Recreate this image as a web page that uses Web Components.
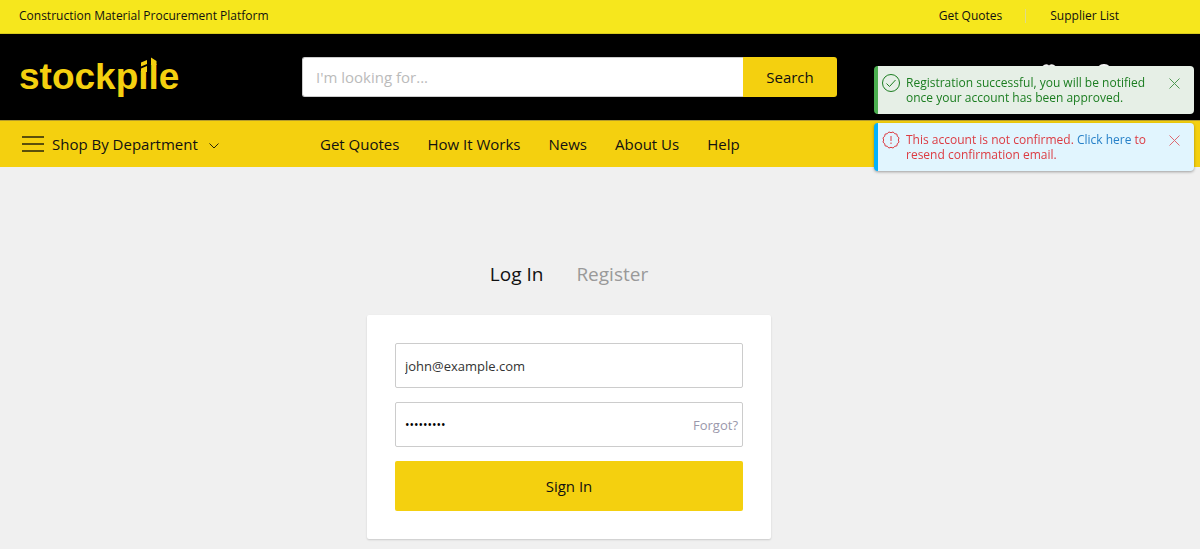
<!DOCTYPE html>
<html lang="en">
<head>
<meta charset="utf-8">
<meta name="viewport" content="width=device-width, initial-scale=1">
<title>Stockpile – Log In</title>
<style>
  html { --brand: #f4d00f; --ink: #111; --start: 19px; --end: 81px; }
  body { margin: 0; min-height: 100vh; background: #f0f0f0; color: var(--ink); font: 15px/24px "Open Sans", "Noto Sans", sans-serif; }
</style>
</head>
<body>
<top-bar>
  <span>Construction Material Procurement Platform</span>
  <bar-link slot="links" href="#quotes">Get Quotes</bar-link>
  <bar-link slot="links" href="#suppliers">Supplier List</bar-link>
</top-bar>
<site-header></site-header>
<department-nav>
  <nav-link href="#quotes">Get Quotes</nav-link>
  <nav-link href="#how">How It Works</nav-link>
  <nav-link href="#news">News</nav-link>
  <nav-link href="#about">About Us</nav-link>
  <nav-link href="#help">Help</nav-link>
</department-nav>
<login-panel></login-panel>
<toast-stack>
  <toast-message kind="success">Registration successful, you will be notified once your account has been approved.</toast-message>
  <toast-message kind="error">This account is not confirmed. <a href="#resend">Click here</a> to<br>resend confirmation email.</toast-message>
</toast-stack>

<script>
const define = (name, html) => customElements.define(name, class extends HTMLElement {
  connectedCallback() {
    if (this.shadowRoot) return;
    const template = document.createElement('template');
    template.innerHTML = typeof html === 'function' ? html(this) : html;
    this.attachShadow({ mode: 'open' }).append(template.content.cloneNode(true));
  }
});

define('bar-link', el => `
  <style>
    :host { display: block; }
    a { color: inherit; text-decoration: none; }
  </style>
  <a href="${el.getAttribute('href')}"><slot></slot></a>`);

define('nav-link', el => `
  <style>
    :host { display: block; }
    a { color: inherit; text-decoration: none; }
  </style>
  <a href="${el.getAttribute('href')}"><slot></slot></a>`);

define('top-bar', `
  <style>
    :host { display: flex; justify-content: space-between; align-items: center; padding: 6px var(--end) 7px var(--start);
      background: #f6e71d; border-bottom: 1px solid #d9cb1c; font-size: 12px; line-height: 20px; }
    .links { display: flex; gap: 48px; }
    ::slotted(bar-link:last-of-type) { position: relative; }
    ::slotted(bar-link:last-of-type)::before { content: ""; position: absolute; left: -25px; top: 3px; width: 1px; height: 14px; background: #dedb8a; }
  </style>
  <slot></slot>
  <div class="links"><slot name="links"></slot></div>`);

define('stockpile-logo', `
  <style>
    :host { display: block; }
    a { position: relative; display: block; width: max-content; color: var(--brand); text-decoration: none;
      font: bold 37px/42px "Liberation Sans", Arial, sans-serif; }
    svg { position: absolute; left: 0; top: 0; }
  </style>
  <a href="#home">stockpile<svg width="161" height="42" viewBox="0 0 161 42" aria-hidden="true">
    <path d="M75 2h12v5H75zM120 0h10v15h-10zM130 0h9v8h-9z" fill="#000"/>
    <path d="M122 6.500L128 4v4l-6 2.500zM122 12.500L128 10V16h-6zM132 1.500L137.500 5v4H132z" fill="#f4d00f"/>
  </svg></a>`);

define('search-form', `
  <style>
    :host { display: block; }
    form { display: flex; margin: 0; height: 40px; }
    input, button { box-sizing: border-box; margin: 0; font: inherit; }
    input { flex: 1; min-width: 0; padding: 0 13px; border: 1px solid #ccc; border-right: 0; border-radius: 3px 0 0 3px; background: #fff; color: #111; }
    input::placeholder { color: #bbb; opacity: 1; }
    button { width: 94px; padding: 0; border: 0; border-radius: 0 3px 3px 0; background: var(--brand); color: #111; }
  </style>
  <form role="search">
    <input type="search" aria-label="Search products" placeholder="I'm looking for...">
    <button type="button">Search</button>
  </form>`);

define('site-header', `
  <style>
    :host { display: grid; grid-template-columns: 283px minmax(200px, 535px) minmax(0, 1fr); align-items: center;
      min-height: 86px; padding: 0 var(--end) 0 var(--start); background: #000; }
    .tools { display: flex; justify-content: flex-end; gap: 33px; padding-right: 4px; }
    svg { width: 22px; height: 26px; fill: none; stroke: #fff; stroke-width: 2; }
  </style>
  <stockpile-logo></stockpile-logo>
  <search-form></search-form>
  <div class="tools">
    <svg viewBox="0 0 22 26" aria-hidden="true"><path d="M11 23C4 17 4 12 4 7C4 1 9 0 11 3C13 0 18 1 18 7C18 12 18 17 11 23z"/></svg>
    <svg viewBox="0 0 22 26" aria-hidden="true"><circle cx="11" cy="8" r="7"/><path d="M2 25c0-12 18-12 18 0"/></svg>
  </div>`);

define('department-nav', `
  <style>
    :host { display: grid; grid-template-columns: 301px 1fr; align-items: center; min-height: 46px; line-height: 22px;
      padding: 0 var(--end) 0 var(--start); background: var(--brand); border-top: 1px solid #b39b2c; }
    button { display: flex; align-items: center; padding: 0 3px; border: 0; background: none; color: inherit; font: inherit; }
    svg { fill: none; stroke: #28240a; }
    .menu { margin-right: 8px; }
    .caret { margin: 3px 0 0 11px; }
    nav { display: flex; gap: 28px; white-space: nowrap; }
  </style>
  <button type="button" aria-haspopup="true">
    <svg class="menu" width="22" height="16" viewBox="0 0 22 16" stroke-width="1.5" aria-hidden="true"><path d="M0 1h22M0 8h22M0 15h22"/></svg>
    Shop By Department
    <svg class="caret" width="10" height="6" viewBox="0 0 10 6" aria-hidden="true"><path d="M.5 .5L5 5L9.500 .5"/></svg>
  </button>
  <nav aria-label="Main"><slot></slot></nav>`);

define('login-panel', `
  <style>
    :host { display: flex; flex-direction: column; align-items: center; padding: 92px var(--end) 9px var(--start); }
    .tabs { display: flex; gap: 33px; font-size: 19px; line-height: 30px; font-weight: 500; margin-bottom: 26px; }
    a { text-decoration: none; color: #111; }
    .tabs a + a { color: #999; }
    form { box-sizing: border-box; width: 100%; max-width: 404px; padding: 28px; display: grid; gap: 14px; margin: 0;
      background: #fff; border-radius: 2px; box-shadow: 0 1px 2px rgba(0,0,0,.16); }
    .field { display: flex; align-items: center; box-sizing: border-box; height: 45px; padding: 0 4px 0 9px; border: 1px solid #ccc; border-radius: 2px; font-size: 13px; }
    .field a { color: #9a98ab; }
    input { flex: 1; min-width: 0; height: 100%; box-sizing: border-box; margin: 0; padding: 0; border: 0; background: none; color: #333; font: inherit; outline: none; }
    input[type=password] { color: #000; font-size: 12px; }
    button { height: 50px; padding: 0; border: 0; border-radius: 2px; background: var(--brand); color: #111; font: inherit; }
  </style>
  <div class="tabs"><a href="#login">Log In</a><a href="#register">Register</a></div>
  <form>
    <div class="field"><input type="email" aria-label="Email" value="john@example.com"></div>
    <div class="field"><input type="password" aria-label="Password" value="password1"><a href="#forgot">Forgot?</a></div>
    <button type="button">Sign In</button>
  </form>`);

define('toast-stack', `
  <style>
    :host { position: fixed; top: 66px; right: 6px; width: 320px; max-width: calc(100% - 12px); display: grid; gap: 9px; }
  </style>
  <slot></slot>`);

// Twelve-lobed seal outline around the exclamation mark.
const seal = Array.from({ length: 12 }, (_, i) => {
  const at = (r, step) => {
    const a = (i + step) * Math.PI / 6;
    return (9 + r * Math.sin(a)).toFixed(2) + ' ' + (9 - r * Math.cos(a)).toFixed(2);
  };
  return (i ? '' : 'M' + at(7.3, 0)) + 'Q' + at(9.6, .5) + ' ' + at(7.3, 1);
}).join('') + 'z';
const toastIcons = {
  success: '<circle cx="9" cy="9" r="8.500"/><path d="M4.500 9.500L7.500 12.500L13.500 6"/>',
  error: `<path d="${seal}"/><path d="M9 5v5M9 11.500v1.500"/>`
};
define('toast-message', el => `
  <style>
    :host { display: flex; align-items: flex-start; box-sizing: border-box; min-height: 48px; padding: 8px 14px 8px 4px;
      border-left: 4px solid #4caf50; border-radius: 4px; background: #e6efe6; color: #1b7d20;
      box-shadow: 0 1px 3px rgba(0,0,0,.35); font-size: 12px; line-height: 15px; }
    :host([kind=error]) { border-left-color: #03b1fc; background: #e1f5fe; color: #dc3b42; }
    .text { flex: 1; min-width: 0; padding: 1px 16px 0 6px; }
    svg { flex: none; fill: none; stroke: currentColor; }
    ::slotted(a) { color: #2680c8; text-decoration: none; }
    button { display: flex; margin: 4px 0 0; padding: 0; border: 0; background: none; color: inherit; opacity: .75; }
  </style>
  <svg width="18" height="18" viewBox="0 0 18 18" aria-hidden="true">${toastIcons[el.getAttribute('kind')]}</svg>
  <div class="text" role="status"><slot></slot></div>
  <button type="button" aria-label="Close"><svg width="11" height="11" viewBox="0 0 11 11" aria-hidden="true"><path d="M.5 .5l10 10M10.500 .5l-10 10"/></svg></button>`);
</script>
</body>
</html>
